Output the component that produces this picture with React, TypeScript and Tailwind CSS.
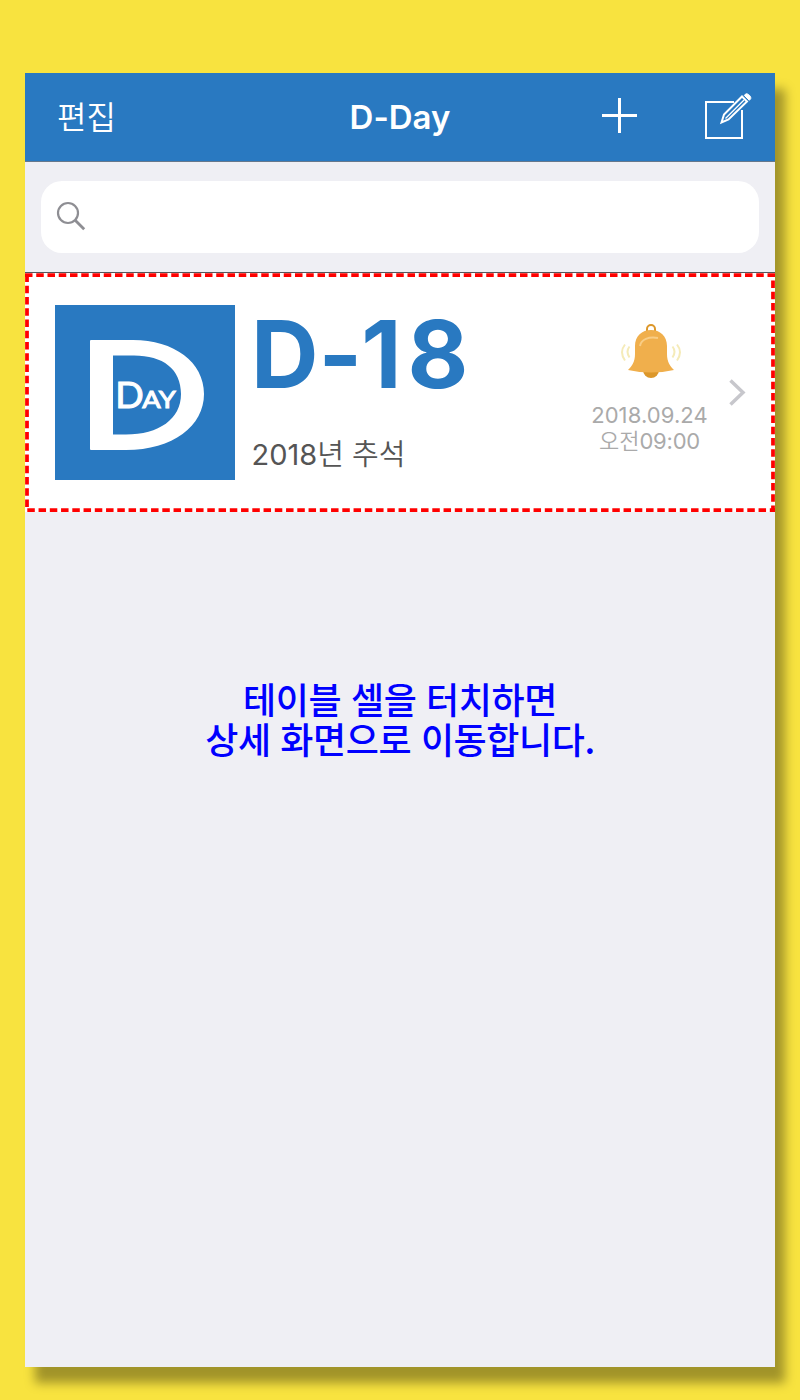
export default function App() {
  return (
    <div className="h-[1400px] w-[800px] overflow-hidden bg-[#f8e33f] px-[25px] pt-[73px] font-['Inter','Noto_Sans_CJK_KR',sans-serif] [font-feature-settings:'calt'_0]">
      <main className="flex h-[1294px] w-[750px] flex-col bg-[#efeff4] shadow-[10px_16px_10px_rgba(0,0,0,0.35)]">
        <header className="grid h-[89px] shrink-0 grid-cols-3 items-center border-b border-[#66788c] bg-[#2979c1] text-white">
          <span className="pt-[2px] pl-[32px] text-[32px] leading-[44px] font-[350]">편집</span>
          <h1 className="text-center text-[33px] leading-[44px] font-semibold">D-Day</h1>
          <div className="flex items-center justify-end">
            <svg className="h-[88px] w-[200px]" viewBox="575 73 200 88" fill="none" stroke="white">
              <path d="M602 115.5h35M619.5 98v35" strokeWidth="3" />
              <path d="M734 102H706v36h36v-28" strokeWidth="2" />
              <path d="M721.5 122.500l2.500-8 18-18 5 5-18.500 18z" strokeWidth="2" />
              <path d="M725.5 118.500l18.500-18.500" strokeWidth="1.3" />
              <path d="M744.300 95.300l1-1c2-2.200 7.200 3 5 5l-1 1z" fill="white" strokeWidth="1" />
            </svg>
          </div>
        </header>

        <div className="h-[111px] shrink-0 border-b border-[#55555a] px-4 pt-[19px]">
          <div className="flex h-[72px] items-center rounded-[21px] bg-white pb-[2px] pl-[15px]">
            <svg className="h-[30px] w-[30px]" viewBox="0 0 30 30" fill="none" stroke="#8e8e93">
              <circle cx="12" cy="12" r="10" strokeWidth="2.2" />
              <path d="M19.2 19.2l9 9" strokeWidth="2.8" />
            </svg>
          </div>
        </div>

        <section className="relative flex h-[239px] shrink-0 bg-white pt-8 pl-[30px]">
          <svg className="h-[175px] w-[180px] shrink-0" viewBox="0 0 180 175">
            <path fill="#2979c1" d="M0 0h180v175H0z" />
            <path
              fill="white"
              fillRule="evenodd"
              d="M36 35H78C119 35 149 57 149 89C149 121 118 145 71 145H36Q35 145 35 144V36Q35 35 36 35ZM58 50.500V129.500H71C104 129.500 126 114 126 89C126 64 108 50.500 79 50.500Z"
            />
            <text x="60.300" y="103.300" fontFamily="Lato" fontWeight="400" fontSize="37" textLength="28.500" lengthAdjust="spacingAndGlyphs" fill="white" stroke="white" strokeWidth="1">D</text>
            <text x="87.300" y="102.800" fontFamily="Lato" fontWeight="400" fontSize="23" textLength="33.500" lengthAdjust="spacingAndGlyphs" fill="white" stroke="white" strokeWidth="1">AY</text>
          </svg>

          <div className="flex w-[326px] shrink-0 flex-col pl-[16px]">
            <strong className="text-[93.5px] leading-[98px] font-bold text-[#2979c1]">
              D-<span className="ml-[-1px] tracking-[6px]">1</span>8
            </strong>
            <span className="mt-[31px] ml-[0.5px] text-[29px] leading-[42px] font-[350] text-[#555]">
              <span className="font-normal">2018</span>년 추석
            </span>
          </div>

          <div className="flex w-[170px] shrink-0 flex-col items-center pl-[9px]">
            <svg className="mt-[18px] h-[56px] w-[64px]" viewBox="619 323 64 56" fill="none">
              <path d="M647 331.500v-2.500a4 4 0 0 1 8 0v2.500" stroke="#dc972a" strokeWidth="2" />
              <circle cx="651" cy="370" r="8" fill="#dc972a" />
              <path fill="#f0af4c" d="M635 346c0-10 7-16 16-16s16 6 16 16v8c0 8 3 12 7 16q-23 5-46 0c4-4 7-8 7-16z" />
              <path d="M640 346c1-7 9-9.500 18-8" stroke="#f8cd86" strokeWidth="2" />
              <path d="M629.500 346.500q-4 5 0 11M625 344.500q-6 7.500 0 16M672.500 346.500q4 5 0 11M677 344.500q6 7.500 0 16" stroke="#f5ebb8" strokeWidth="2" />
            </svg>
            <div className="mt-[23px] mr-[2px] text-center text-[22px] leading-[26px] font-[350] text-[#aaa]">
              <p className="font-normal tracking-[0.1px]">2018.09.24</p>
              <p>
                오전<span className="font-normal tracking-[-0.2px]">09:00</span>
              </p>
            </div>
          </div>
          <svg className="mt-[73px] ml-[-2px] h-[30px] w-[20px] shrink-0" viewBox="0 0 20 30" fill="none">
            <path d="M1.500 2.500L14 14.500L1.500 26.500" stroke="#c7c7cc" strokeWidth="3.500" />
          </svg>

          <svg className="absolute inset-0 h-[239px] w-[750px]" viewBox="0 0 750 239" fill="none" stroke="#f00" strokeWidth="3.750" strokeDasharray="7.500 3.750">
            <path d="M0 2H750" />
            <path d="M748 7.500V239" />
            <path d="M2.300 237H750" />
            <path d="M2 1.500V235" />
          </svg>
        </section>

        <p className="pt-[166px] text-center font-['Noto_Sans_CJK_KR',sans-serif] text-[36px] leading-[40px] font-medium tracking-[-0.4px] text-[#00f] [word-spacing:2px]">
          테이블 셀을 터치하면
          <br />
          상세 화면으로 이동합니다.
        </p>
      </main>
    </div>
  );
}
